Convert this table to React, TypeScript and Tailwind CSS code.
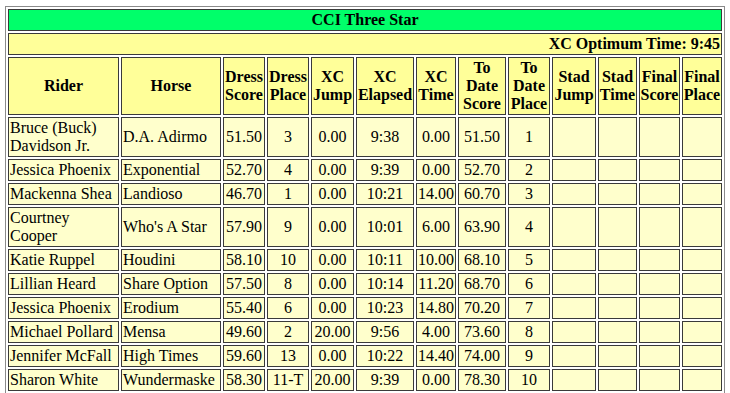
const columns = [
  { label: ['Rider'], w: 'w-[111px]' },
  { label: ['Horse'], w: 'w-[100px]' },
  { label: ['Dress', 'Score'], w: 'w-[42px]' },
  { label: ['Dress', 'Place'], w: 'w-[42px]' },
  { label: ['XC', 'Jump'], w: 'w-[43px]' },
  { label: ['XC', 'Elapsed'], w: 'w-[58px]' },
  { label: ['XC', 'Time'], w: 'w-[40px]' },
  { label: ['To', 'Date', 'Score'], w: 'w-[48px]' },
  { label: ['To', 'Date', 'Place'], w: 'w-[42px]' },
  { label: ['Stad', 'Jump'], w: 'w-[44px]' },
  { label: ['Stad', 'Time'], w: 'w-[39px]' },
  { label: ['Final', 'Score'], w: 'w-[41px]' },
  { label: ['Final', 'Place'], w: 'w-[40px]' },
];

type Row = [string, string, string, string, string, string, string, string, string];

const rows: Row[] = [
  ['Bruce (Buck) Davidson Jr.', 'D.A. Adirmo', '51.50', '3', '0.00', '9:38', '0.00', '51.50', '1'],
  ['Jessica Phoenix', 'Exponential', '52.70', '4', '0.00', '9:39', '0.00', '52.70', '2'],
  ['Mackenna Shea', 'Landioso', '46.70', '1', '0.00', '10:21', '14.00', '60.70', '3'],
  ['Courtney Cooper', "Who's A Star", '57.90', '9', '0.00', '10:01', '6.00', '63.90', '4'],
  ['Katie Ruppel', 'Houdini', '58.10', '10', '0.00', '10:11', '10.00', '68.10', '5'],
  ['Lillian Heard', 'Share Option', '57.50', '8', '0.00', '10:14', '11.20', '68.70', '6'],
  ['Jessica Phoenix', 'Erodium', '55.40', '6', '0.00', '10:23', '14.80', '70.20', '7'],
  ['Michael Pollard', 'Mensa', '49.60', '2', '20.00', '9:56', '4.00', '73.60', '8'],
  ['Jennifer McFall', 'High Times', '59.60', '13', '0.00', '10:22', '14.40', '74.00', '9'],
  ['Sharon White', 'Wundermaske', '58.30', '11-T', '20.00', '9:39', '0.00', '78.30', '10'],
];

const cell = 'border border-[#3a3a3a] p-px align-middle';

export default function App() {
  return (
    <div className="min-h-screen bg-white pl-[5px] pt-[6px] font-['Liberation_Serif',serif] text-[16px] leading-[18px] text-black">
      <table className="w-[720px] table-fixed border-separate border-spacing-[2px] border border-[#8a8a8a]">
        <colgroup>
          {columns.map((c) => (
            <col key={c.label.join(' ')} className={c.w} />
          ))}
        </colgroup>
        <tbody>
          <tr>
            <th colSpan={13} className={`${cell} bg-[#00ff6a] text-center font-bold`}>
              CCI Three Star
            </th>
          </tr>
          <tr>
            <th colSpan={13} className={`${cell} bg-[#ffff99] text-right font-bold`}>
              XC Optimum Time: 9:45
            </th>
          </tr>
          <tr>
            {columns.map((c) => (
              <th
                key={c.label.join(' ')}
                className={`${cell} bg-[#ffff99] px-0 text-center font-bold whitespace-nowrap`}
              >
                {c.label.map((l, i) => (
                  <div key={i}>{l}</div>
                ))}
              </th>
            ))}
          </tr>
          {rows.map((r, i) => (
            <tr key={i} className="bg-[#ffffcc]">
              <td className={`${cell} text-left`}>{r[0]}</td>
              <td className={`${cell} text-left`}>{r[1]}</td>
              {r.slice(2).map((v, j) => (
                <td key={j} className={`${cell} text-center whitespace-nowrap`}>
                  {v}
                </td>
              ))}
              <td className={cell}>&nbsp;</td>
              <td className={cell}>&nbsp;</td>
              <td className={cell}>&nbsp;</td>
              <td className={cell}>&nbsp;</td>
            </tr>
          ))}
        </tbody>
      </table>
    </div>
  );
}
